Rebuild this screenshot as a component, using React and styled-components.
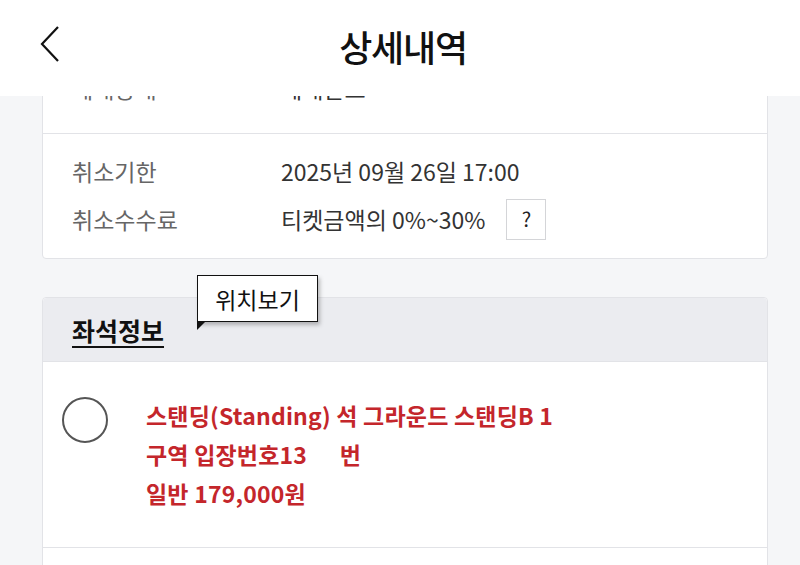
import React from 'react';
import styled, {createGlobalStyle} from 'styled-components';

const Global = createGlobalStyle`
    html, body {
        margin: 0;
        padding: 0;
        background: #f5f6f8;
        font-family: "Noto Sans CJK KR", "Noto Sans", sans-serif;
        overflow: hidden;
    }
`;

const style = {};

style.Page = styled.div`
    width: 800px;
    height: 565px;
    position: relative;
    overflow: hidden;
    background: #f5f6f8;
`;

style.Header = styled.header`
    position: absolute;
    top: 0;
    left: 0;
    right: 0;
    height: 96px;
    background: #fff;
    z-index: 5;
    display: flex;
    align-items: center;
    justify-content: center;
`;

style.Back = styled.button`
    position: absolute;
    left: 36px;
    top: 22px;
    width: 30px;
    height: 44px;
    border: none;
    background: none;
    padding: 0;
`;

style.Title = styled.h1`
    margin: 0 0 4px 6px;
    font-size: 36px;
    font-weight: 500;
    letter-spacing: -1.2px;
    color: #111;
`;

style.Content = styled.main`
    padding: 60px 32px 0 42px;
    display: flex;
    flex-direction: column;
    gap: 38px;
`;

style.Card = styled.section`
    position: relative;
    background: #fff;
    border: 1px solid #e2e3e7;
    border-radius: 4px;
`;

style.Block = styled.div`
    padding: ${p => p.$pad};
    display: flex;
    flex-direction: column;
    gap: 6px;
    border-bottom: ${p => p.$divider ? '1px solid #e2e3e7' : 'none'};
`;

style.Row = styled.div`
    display: flex;
    align-items: center;
    height: ${p => p.$h || 40}px;
    font-size: 23px;
    line-height: 32px;
    letter-spacing: 0;
`;

style.Label = styled.span`
    width: 209px;
    flex-shrink: 0;
    color: #666;
    font-weight: 400;
`;

style.Value = styled.span`
    color: #333;
    font-weight: 400;
`;

style.Help = styled.span`
    display: inline-flex;
    align-items: center;
    justify-content: center;
    width: 38px;
    height: 39px;
    margin-left: 21px;
    border: 1.5px solid #d4d5d8;
    color: #222;
    font-size: 20px;
`;

style.SeatHead = styled.div`
    height: 63px;
    background: #ebecf0;
    display: flex;
    align-items: center;
    padding-left: 29px;
    border-radius: 4px 4px 0 0;
    border-bottom: 1px solid #e2e3e7;
`;

style.SeatTitle = styled.h2`
    margin: 0;
    font-size: 25px;
    font-weight: 700;
    color: #111;
    text-decoration: underline;
    text-underline-offset: 5px;
    text-decoration-thickness: 2px;
    letter-spacing: 0;
`;

style.Tooltip = styled.div`
    position: absolute;
    left: 154px;
    top: -23px;
    width: 119px;
    height: 45px;
    background: #fff;
    border: 1.5px solid #111;
    box-shadow: 2px 3px 4px rgba(0,0,0,0.25);
    display: flex;
    align-items: center;
    justify-content: center;
    font-size: 23px;
    color: #111;
    letter-spacing: 0;
    z-index: 2;

    &::after {
        content: '';
        position: absolute;
        left: -1.5px;
        bottom: -9px;
        width: 0;
        height: 0;
        border-left: 8px solid #111;
        border-bottom: 8px solid transparent;
    }
`;

style.SeatBody = styled.div`
    display: flex;
    align-items: flex-start;
    gap: 38px;
    padding: 34px 19px 34px 19px;
    border-bottom: 1px solid #e2e3e7;
`;

style.Radio = styled.span`
    width: 42px;
    height: 42px;
    margin-top: 1px;
    border: 2px solid #555;
    border-radius: 50%;
    flex-shrink: 0;
`;

style.SeatText = styled.div`
    color: #c4262b;
    font-size: 23px;
    font-weight: 700;
    line-height: 39px;
    letter-spacing: 0.2px;
    white-space: pre;
`;

style.Spacer = styled.div`
    height: 60px;
`;

const App = () => {
    return (
        <style.Page>
            <Global/>
            <style.Header>
                <style.Back aria-label="back">
                    <svg width="30" height="44" viewBox="0 0 30 44">
                        <polyline points="22,5 6,22 22,39" fill="none" stroke="#111" strokeWidth="2.2"/>
                    </svg>
                </style.Back>
                <style.Title>상세내역</style.Title>
            </style.Header>

            <style.Content>
                <style.Card>
                    <style.Block $pad="11px 29px 29px" $divider>
                        <style.Row $h={32}>
                            <style.Label>예매상태</style.Label>
                            <style.Value>예매완료</style.Value>
                        </style.Row>
                    </style.Block>
                    <style.Block $pad="17px 29px 17px">
                        <style.Row>
                            <style.Label>취소기한</style.Label>
                            <style.Value>2025년 09월 26일 17:00</style.Value>
                        </style.Row>
                        <style.Row $h={44}>
                            <style.Label>취소수수료</style.Label>
                            <style.Value>티켓금액의 0%~30%</style.Value>
                            <style.Help>?</style.Help>
                        </style.Row>
                    </style.Block>
                </style.Card>

                <style.Card>
                    <style.Tooltip>위치보기</style.Tooltip>
                    <style.SeatHead>
                        <style.SeatTitle>좌석정보</style.SeatTitle>
                    </style.SeatHead>
                    <style.SeatBody>
                        <style.Radio/>
                        <style.SeatText>
                            {'스탠딩(Standing) 석 그라운드 스탠딩B 1\n구역 입장번호13      번\n일반 179,000원'}
                        </style.SeatText>
                    </style.SeatBody>
                    <style.Spacer/>
                </style.Card>
            </style.Content>
        </style.Page>
    );
};

export default App;
